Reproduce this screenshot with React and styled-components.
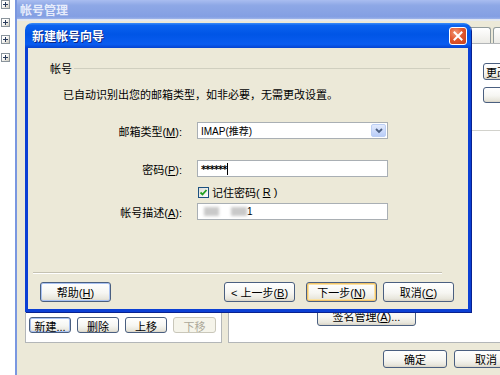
import styled, { createGlobalStyle } from "styled-components";

const GlobalStyle = createGlobalStyle`
  html, body { margin: 0; padding: 0; }
  body {
    background: #fff;
    font-family: "Liberation Sans", "Noto Sans CJK SC", sans-serif;
    font-size: 11px;
    color: #000;
  }
  * { box-sizing: border-box; }
`;

const Screen = styled.div`
  display: flex;
  width: 500px;
  height: 375px;
  overflow: hidden;
  background: #fff;
`;

const TreeStrip = styled.div`
  flex: none;
  width: 15px;
  display: flex;
  flex-direction: column;
  gap: 8.5px;
  padding: 0 0 0 1px;
`;

const Expander = styled.span`
  position: relative;
  width: 9px;
  height: 9px;
  border: 1px solid #8a949c;
  background: linear-gradient(135deg, #fff 35%, #cfcbbd);
  &::before,
  &::after {
    content: "";
    position: absolute;
    background: #2a3c5c;
  }
  &::before { left: 1px; right: 1px; top: 3px; height: 1px; }
  &::after { top: 1px; bottom: 1px; left: 3px; width: 1px; }
`;

const OuterWindow = styled.section`
  flex: none;
  width: 515px;
  display: flex;
  flex-direction: column;
  border-left: 2px solid #7a97e0;
`;

const OuterTitle = styled.header`
  flex: none;
  height: 21px;
  display: flex;
  align-items: center;
  padding: 0 0 2px 3px;
  background: linear-gradient(180deg, #a9bdf0 0%, #8ea8e6 25%, #839fe3 80%, #9cb3ea 90%, #dde4f3 91%, #e8ebf0 100%);
  color: #e6ecfb;
  font-size: 12px;
  font-weight: bold;
`;

const OuterBody = styled.div`
  position: relative;
  flex: 1;
  display: flex;
  flex-direction: column;
  padding: 0 12px 0 8px;
  background: #ece9d8;
`;

const TabStrip = styled.div`
  flex: none;
  height: 22px;
  display: flex;
  align-items: flex-end;
  gap: 2px;
  padding-left: 370px;
`;

const Tab = styled.div`
  flex: none;
  width: ${(p) => p.$w}px;
  height: 16px;
  display: flex;
  align-items: center;
  justify-content: center;
  border: 1px solid #919b9c;
  border-bottom: none;
  border-radius: 3px 3px 0 0;
  background: linear-gradient(180deg, #fff, #ecebe6);
  white-space: nowrap;
`;

const TabPage = styled.div`
  flex: 1;
  display: grid;
  grid-template-columns: 197px 1fr;
  column-gap: 6px;
`;

const LeftPanel = styled.div`
  display: flex;
  align-items: flex-end;
  gap: 6px;
  padding: 0 3px 9px 3px;
  background: #fff;
  border: 1px solid #b3b6b8;
`;

const RightPanel = styled.div`
  display: flex;
  flex-direction: column;
  background: #fff;
  border: 1px solid #b3b6b8;
`;

const RightTop = styled.div`
  flex: none;
  height: 87px;
  display: flex;
  flex-direction: column;
  align-items: flex-start;
  gap: 7px;
  padding: 19px 0 0 254px;
  border-bottom: 1px solid #d2d2cc;
`;

const RightBottom = styled.div`
  margin-top: auto;
  padding: 0 0 16px 88px;
`;

const Footer = styled.div`
  flex: none;
  height: 32px;
  display: flex;
  justify-content: flex-end;
  gap: 7px;
  padding-top: 7px;
`;

const XpButton = styled.button`
  flex: none;
  width: ${(p) => (p.$w ? `${p.$w}px` : "auto")};
  height: ${(p) => p.$h || 20}px;
  margin-right: ${(p) => p.$mr || 0}px;
  padding: 0 2px;
  font: inherit;
  font-size: 11px;
  color: ${(p) => (p.disabled ? "#aca899" : "#000")};
  white-space: nowrap;
  border: 1px solid ${(p) => (p.disabled ? "#c9c7ba" : "#4a5f80")};
  border-radius: 3px;
  background: ${(p) =>
    p.disabled
      ? "#f5f4ea"
      : "linear-gradient(180deg, #ffffff 0%, #f6f6f2 55%, #e8e6dc 88%, #d8d3c6 100%)"};
  box-shadow: ${(p) =>
    p.$default
      ? "inset 0 0 0 1px #f1c46a, inset 0 0 0 2px #fbe3a6"
      : p.$focus
      ? "inset 0 0 0 1px #a9c2f2"
      : "none"};
  u { text-decoration: underline; }
`;

const Dialog = styled.div`
  position: absolute;
  left: 8px;
  top: 2px;
  width: 446px;
  height: 289px;
  display: flex;
  flex-direction: column;
  border-radius: 7px 7px 0 0;
  box-shadow: 1px 1px 0 #08218f;
`;

const DialogTitle = styled.header`
  flex: none;
  height: 25px;
  display: flex;
  align-items: center;
  justify-content: space-between;
  padding: 0 4px 0 7px;
  border-radius: 7px 7px 0 0;
  background: linear-gradient(180deg, #3c8df8 0%, #0b62ef 10%, #0055e6 45%, #0a5cf0 85%, #0543cf 100%);
  color: #fff;
  font-size: 12px;
  font-weight: bold;
  text-shadow: 1px 1px 0 #0b2580;
`;

const CloseButton = styled.span`
  width: 18px;
  height: 18px;
  display: flex;
  align-items: center;
  justify-content: center;
  border: 1px solid #fff;
  border-radius: 3px;
  background: radial-gradient(circle at 35% 30%, #f29a78 0%, #e2582f 45%, #c4401a 100%);
`;

const DialogFrame = styled.div`
  flex: 1;
  display: flex;
  flex-direction: column;
  padding-top: 13px;
  background: #ece9d8;
  border: 3px solid #0b3fd4;
  border-top: none;
`;

const GroupHeader = styled.div`
  display: flex;
  align-items: center;
  gap: 2px;
  height: 14px;
  padding: 0 18px 0 22px;
  &::after {
    content: "";
    flex: 1;
    height: 1px;
    background: #d0cfbf;
  }
`;

const Description = styled.p`
  margin: 13px 0 0 35px;
  line-height: 14px;
`;

const FormRow = styled.div`
  display: grid;
  grid-template-columns: 154px 191px;
  column-gap: 15px;
  align-items: center;
  height: ${(p) => p.$h || 17}px;
  margin-top: ${(p) => p.$top}px;
`;

const Label = styled.label`
  text-align: right;
  u { text-decoration: underline; }
`;

const Field = styled.div`
  height: 17px;
  display: flex;
  align-items: center;
  gap: ${(p) => p.$gap || 0}px;
  padding: 0 1px 0 3px;
  border: 1px solid #a9afb4;
  background: #fff;
  font-size: 10px;
  white-space: nowrap;
`;

const DropArrow = styled.span`
  margin-left: auto;
  width: 15px;
  height: 13px;
  display: flex;
  align-items: center;
  justify-content: center;
  border: 1px solid #bccff5;
  border-radius: 2px;
  background: linear-gradient(180deg, #e3ebfd, #b9cdf8);
`;

const Stars = styled.span`
  font-family: "DejaVu Sans", sans-serif;
  font-size: 10px;
  font-weight: bold;
  letter-spacing: -1px;
  line-height: 1;
  padding-top: 3px;
`;

const Caret = styled.span`
  width: 1px;
  height: 12px;
  background: #000;
`;

const Smudge = styled.span`
  width: ${(p) => p.$w}px;
  height: 9px;
  margin-left: ${(p) => p.$ml || 0}px;
  background: #c9c9c9;
  filter: blur(1.5px);
`;

const CheckLine = styled.label`
  grid-column: 2;
  display: flex;
  align-items: center;
  gap: 3px;
  margin-left: 1px;
  font-size: 11px;
`;

const CheckBox = styled.span`
  width: 11px;
  height: 11px;
  display: flex;
  align-items: center;
  justify-content: center;
  border: 1px solid #1c5180;
  background: linear-gradient(135deg, #dcdcd7, #fff);
`;

const Spacer = styled.div`
  flex: 1;
`;

const Separator = styled.hr`
  margin: 0 26px 0 5px;
  border: none;
  border-top: 1px solid #c5c2b2;
  border-bottom: 1px solid #fff;
`;

const ButtonRow = styled.div`
  display: flex;
  align-items: center;
  padding: 8px 14px 7px 12px;
`;

const NavGroup = styled.div`
  display: flex;
  margin-left: auto;
  gap: 6px;
`;

export default function App() {
  return (
    <>
      <GlobalStyle />
      <Screen>
        <TreeStrip>
          <Expander />
          <Expander />
          <Expander />
          <Expander />
        </TreeStrip>
        <OuterWindow>
          <OuterTitle>帐号管理</OuterTitle>
          <OuterBody>
            <TabStrip>
              <Tab $w={96}>服务器设置</Tab>
              <Tab $w={60}>高级</Tab>
            </TabStrip>
            <TabPage>
              <LeftPanel>
                <XpButton $w={42} $h={16} $focus>新建...</XpButton>
                <XpButton $w={42} $h={16}>删除</XpButton>
                <XpButton $w={42} $h={16}>上移</XpButton>
                <XpButton $w={43} $h={16} disabled>下移</XpButton>
              </LeftPanel>
              <RightPanel>
                <RightTop>
                  <XpButton $h={17}>更改密码(W)...</XpButton>
                  <XpButton $w={75} $h={16}>属性(R)</XpButton>
                </RightTop>
                <RightBottom>
                  <XpButton $w={99}>签名管理(<u>A</u>)...</XpButton>
                </RightBottom>
              </RightPanel>
            </TabPage>
            <Footer>
              <XpButton $w={64} $h={18}>确定</XpButton>
              <XpButton $w={64} $h={18}>取消</XpButton>
            </Footer>

            <Dialog>
              <DialogTitle>
                新建帐号向导
                <CloseButton>
                  <svg width="10" height="10" viewBox="0 0 10 10">
                    <path d="M1.5 1.5 L8.5 8.5 M8.5 1.5 L1.5 8.5" stroke="#fff" strokeWidth="2" strokeLinecap="square" />
                  </svg>
                </CloseButton>
              </DialogTitle>
              <DialogFrame>
                <GroupHeader>帐号</GroupHeader>
                <Description>已自动识别出您的邮箱类型，如非必要，无需更改设置。</Description>

                <FormRow $top={20}>
                  <Label>
                    邮箱类型(<u>M</u>):
                  </Label>
                  <Field>
                    IMAP(推荐)
                    <DropArrow>
                      <svg width="8" height="6" viewBox="0 0 8 6">
                        <path d="M1 1 L4 4 L7 1" fill="none" stroke="#4d6185" strokeWidth="1.8" />
                      </svg>
                    </DropArrow>
                  </Field>
                </FormRow>

                <FormRow $top={21}>
                  <Label>
                    密码(<u>P</u>):
                  </Label>
                  <Field $gap={1}>
                    <Stars>******</Stars>
                    <Caret />
                  </Field>
                </FormRow>

                <FormRow $top={7} $h={15}>
                  <CheckLine>
                    <CheckBox>
                      <svg width="9" height="9" viewBox="0 0 9 9">
                        <path d="M1.5 4.5 L3.5 6.5 L7.5 2" fill="none" stroke="#21a121" strokeWidth="1.8" />
                      </svg>
                    </CheckBox>
                    记住密码(<u>R</u>)
                  </CheckLine>
                </FormRow>

                <FormRow $top={4}>
                  <Label>
                    帐号描述(<u>A</u>):
                  </Label>
                  <Field>
                    <Smudge $w={15} $ml={3} />
                    <Smudge $w={16} $ml={12} />
                    <span>1</span>
                  </Field>
                </FormRow>

                <Spacer />
                <Separator />
                <ButtonRow>
                  <XpButton $w={71} $focus>
                    帮助(<u>H</u>)
                  </XpButton>
                  <NavGroup>
                    <XpButton $w={71} $mr={5}>
                      &lt; 上一步(<u>B</u>)
                    </XpButton>
                    <XpButton $w={71} $default>
                      下一步(<u>N</u>)
                    </XpButton>
                    <XpButton $w={71}>
                      取消(<u>C</u>)
                    </XpButton>
                  </NavGroup>
                </ButtonRow>
              </DialogFrame>
            </Dialog>
          </OuterBody>
        </OuterWindow>
      </Screen>
    </>
  );
}
